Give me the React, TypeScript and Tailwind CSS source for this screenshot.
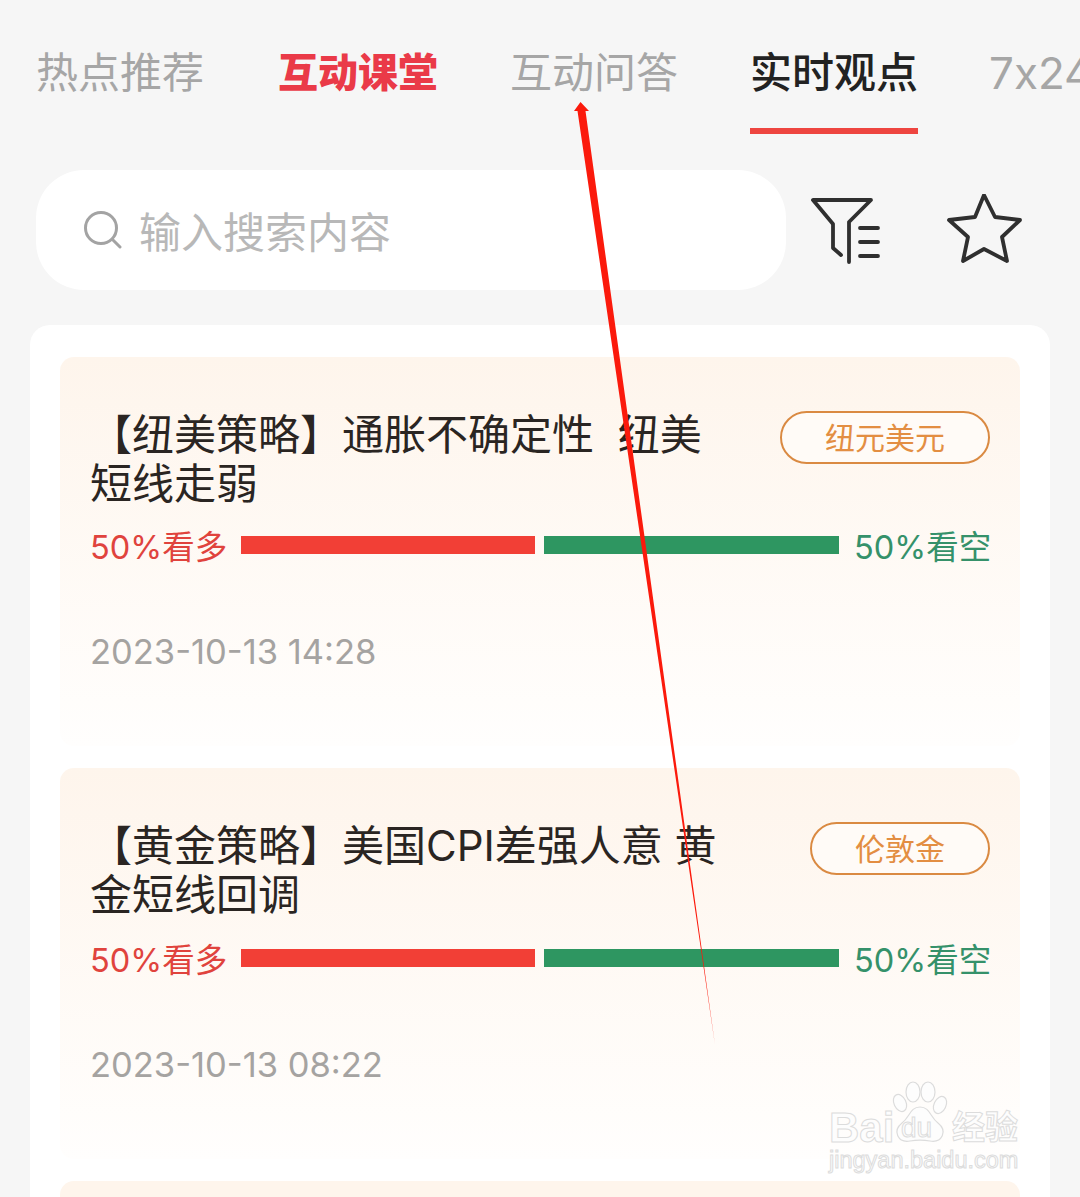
const tabs = [
  { label: "热点推荐", className: "text-[42px] text-[#a6a6a6] font-normal" },
  { label: "互动课堂", className: "text-[40px] px-[4px] text-[#ea3a48] font-black" },
  { label: "互动问答", className: "text-[42px] -ml-[2px] mr-[2px] text-[#a6a6a6] font-normal" },
  { label: "实时观点", className: "text-[42px] text-[#222222] font-medium", active: true },
  { label: "7x24", className: "text-[44px] ml-[1px] text-[#a6a6a6] font-normal [font-feature-settings:'calt'_0]" },
];

const items = [
  {
    title: "【纽美策略】通胀不确定性  纽美短线走弱",
    tag: "纽元美元",
    time: "2023-10-13 14:28",
    rowClass: "mt-[20px]",
  },
  {
    title: "【黄金策略】美国CPI差强人意 黄金短线回调",
    tag: "伦敦金",
    time: "2023-10-13 08:22",
    rowClass: "mt-[22px]",
  },
];

function FilterIcon() {
  return (
    <svg width="75" height="73" viewBox="810 195 75 73" fill="none" stroke="#2f2f2f" strokeWidth="3.8" strokeLinecap="round" strokeLinejoin="round" className="ml-[24px] shrink-0">
      <path d="M841 256 L833 249 V225 L813 201 H871 L849 223 V263" />
      <path d="M860 229 H878 M860 243 H878 M860 257 H878" />
    </svg>
  );
}

function StarIcon() {
  return (
    <svg width="80" height="73" viewBox="945 195 80 73" fill="none" stroke="#2f2f2f" strokeWidth="3.8" strokeLinecap="round" strokeLinejoin="round" className="ml-[60px] shrink-0">
      <path d="M984 196 L995 218 L1020 221 L1002 238 L1007 262 L984 250 L963 262 L968 238 L949 221 L975 218 Z" />
    </svg>
  );
}

function SearchIcon() {
  return (
    <svg width="38" height="38" viewBox="0 0 38 38" fill="none" stroke="#a3a3a3" strokeWidth="3" strokeLinecap="round" className="shrink-0">
      <circle cx="17" cy="17" r="15.5" />
      <path d="M29 29 L36 36" />
    </svg>
  );
}

function Watermark() {
  const outlined = "text-[#fdfdfd] [-webkit-text-stroke:1px_#dcdcdc] font-['Liberation_Sans','Noto_Sans_CJK_SC',sans-serif]";
  return (
    <div className="absolute left-[828px] top-[1080px] w-[195px] h-[95px] pointer-events-none">
      <span className={`absolute left-[1px] top-[26px] text-[42px] leading-[44px] font-bold ${outlined}`}>Bai</span>
      <svg width="60" height="66" viewBox="0 0 60 66" fill="#fdfdfd" stroke="#dcdcdc" strokeWidth="1.2" className="absolute left-[62px] top-[1px]">
        <ellipse cx="10" cy="22" rx="6" ry="9" transform="rotate(-25 10 22)" />
        <ellipse cx="23" cy="11" rx="7" ry="10" />
        <ellipse cx="38" cy="11" rx="7" ry="10" />
        <ellipse cx="50" cy="24" rx="6" ry="9" transform="rotate(25 50 24)" />
        <path d="M30 26 C20 26 20 36 12 42 C2 50 8 62 20 60 C26 59 34 59 40 60 C52 62 58 50 48 42 C40 36 40 26 30 26 Z" />
      </svg>
      <span className={`absolute left-[73px] top-[33px] text-[28px] leading-[30px] ${outlined}`}>du</span>
      <span className={`absolute left-[124px] top-[30px] text-[33px] leading-[36px] font-bold ${outlined}`}>经验</span>
      <span className={`absolute left-[1px] top-[67px] text-[23.5px] leading-[26px] whitespace-nowrap ${outlined}`}>jingyan.baidu.com</span>
    </div>
  );
}

export default function App() {
  return (
    <div className="relative w-[1080px] h-[1197px] overflow-hidden bg-[#f6f6f6] font-['Inter','Noto_Sans_CJK_SC',sans-serif]">
      {/* tabs */}
      <div className="flex gap-[70px] pl-[36px] pt-[49px] whitespace-nowrap">
        {tabs.map((tab) => (
          <div key={tab.label} className="flex flex-col shrink-0">
            <span className={`leading-[48px] ${tab.className}`}>{tab.label}</span>
            <div className={`mt-[31px] h-[6px] ${tab.active ? "bg-[#ee4540]" : ""}`} />
          </div>
        ))}
      </div>

      {/* search */}
      <div className="flex items-center mt-[36px] pl-[36px]">
        <div className="flex items-center gap-[17px] w-[750px] h-[120px] rounded-[48px] bg-white pl-[48px]">
          <SearchIcon />
          <span className="mt-[6px] text-[42px] leading-[48px] text-[#b8b8b8]">输入搜索内容</span>
        </div>
        <FilterIcon />
        <StarIcon />
      </div>

      {/* list */}
      <div className="mx-[30px] mt-[35px] rounded-t-[20px] bg-white px-[30px] pt-[32px] h-[900px]">
        {items.map((item) => (
          <div key={item.time} className="mb-[22px] rounded-[14px] bg-gradient-to-b from-[#fef5ec] to-[#fffefd] pl-[30px] pr-[30px] pt-[53px] pb-[74px]">
            <div className="flex justify-between items-start">
              <h3 className="w-[632px] text-[42px] leading-[49px] font-normal text-[#2a2522] whitespace-pre-wrap">{item.title}</h3>
              <span className="mt-[1px] shrink-0 h-[53px] rounded-full border-2 border-[#da8a42] bg-[#fffbf7] px-[43px] text-[30px] leading-[51px] text-[#e38e42]">{item.tag}</span>
            </div>
            <div className={`flex items-center ${item.rowClass}`}>
              <span className="w-[151px] shrink-0 text-[32.5px] leading-[40px] text-[#e0433d] whitespace-nowrap">50%看多</span>
              <div className="mb-[6px] w-[294px] h-[18px] shrink-0 bg-[#f23f36]" />
              <div className="mb-[6px] ml-[9px] w-[295px] h-[18px] shrink-0 bg-[#2e9661]" />
              <span className="ml-[15px] text-[32.5px] leading-[40px] text-[#35916a] whitespace-nowrap">50%看空</span>
            </div>
            <div className="mt-[64px] text-[34.5px] leading-[40px] text-[#a5a3a1]">{item.time}</div>
          </div>
        ))}
        <div className="h-[60px] rounded-t-[14px] bg-[#fef5ec]" />
      </div>

      {/* red arrow drawn over the shot */}
      <svg width="1080" height="1197" viewBox="0 0 1080 1197" className="absolute left-0 top-0 pointer-events-none">
        <polygon points="580.5,102 589,111 585.5,111 715,1045 577.5,111 574,111" fill="#fb1a0c" />
      </svg>

      <Watermark />
    </div>
  );
}
